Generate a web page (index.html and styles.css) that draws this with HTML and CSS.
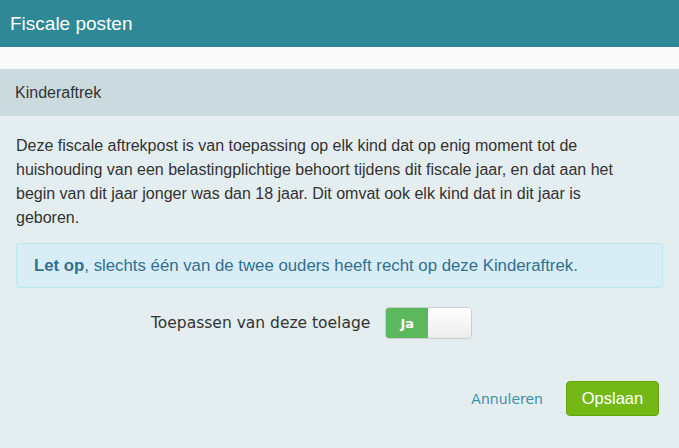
FILE: index.html
```html
<!DOCTYPE html>
<html lang="nl">
<head>
    <meta charset="UTF-8">
    <title>Fiscale posten</title>
    <link rel="stylesheet" href="styles.css">
</head>
<body>
    <div class="modal">
        <div class="modal-header">
            <h1>Fiscale posten</h1>
        </div>
        <div class="spacer"></div>
        <div class="section-title">Kinderaftrek</div>
        <div class="section-body">
            <p class="intro">Deze fiscale aftrekpost is van toepassing op elk kind dat op enig moment tot de huishouding van een belastingplichtige behoort tijdens dit fiscale jaar, en dat aan het begin van dit jaar jonger was dan 18 jaar. Dit omvat ook elk kind dat in dit jaar is geboren.</p>
            <div class="alert"><strong>Let op</strong>, slechts één van de twee ouders heeft recht op deze Kinderaftrek.</div>
            <div class="toggle-row">
                <span class="toggle-label">Toepassen van deze toelage</span>
                <div class="toggle">
                    <span class="toggle-on">Ja</span>
                    <span class="toggle-handle"></span>
                </div>
            </div>
            <div class="actions">
                <a href="#" class="cancel">Annuleren</a>
                <a href="#" class="save">Opslaan</a>
            </div>
        </div>
    </div>
</body>
</html>
```

FILE: styles.css
```css
*{
    margin: 0;
    padding: 0;
    box-sizing: border-box;
}

body{
    font-family: "Liberation Sans", Arial, sans-serif;
    background: #e4edf0;
    color: #333;
}

.modal{
    width: 679px;
    height: 448px;
    background: #e4edf0;
}

.modal-header{
    height: 47px;
    background: #2e8896;
    padding: 0 10px;
    display: flex;
    align-items: center;
}

.modal-header h1{
    color: #fff;
    font-size: 19px;
    font-weight: 400;
}

.spacer{
    height: 22px;
    background: #fafafa;
}

.section-title{
    height: 47px;
    background: #cbdadf;
    padding: 0 15px;
    display: flex;
    align-items: center;
    font-size: 16px;
    color: #333;
}

.section-body{
    padding: 18px 16px 0 16px;
}

.intro{
    font-size: 16px;
    line-height: 24px;
    color: #333;
    padding-right: 47px;
}

.alert{
    margin-top: 13px;
    height: 45px;
    background: #d9edf7;
    border: 1px solid #bce8f1;
    border-radius: 3px;
    color: #31708f;
    font-size: 16.8px;
    padding: 0 17px;
    display: flex;
    align-items: center;
}

.toggle-row{
    display: flex;
    align-items: center;
    padding-left: 135px;
    margin-top: 19px;
}

.toggle-label{
    font-family: "DejaVu Sans", Verdana, sans-serif;
    font-size: 15.5px;
    color: #333;
    margin-right: 15px;
}

.toggle{
    width: 87px;
    height: 32px;
    border: 1px solid #ccc;
    border-radius: 4px;
    display: flex;
    overflow: hidden;
}

.toggle-on{
    width: 42px;
    background: #5cb85c;
    color: #fff;
    font-family: "DejaVu Sans", Verdana, sans-serif;
    font-size: 13px;
    font-weight: 600;
    display: flex;
    align-items: center;
    justify-content: center;
}

.toggle-handle{
    flex: 1;
    background: linear-gradient(#fff, #ececec);
}

.actions{
    display: flex;
    justify-content: flex-end;
    align-items: center;
    margin-top: 42px;
    padding-right: 4px;
}

.cancel{
    color: #3a94a6;
    text-decoration: none;
    font-family: "DejaVu Sans", Verdana, sans-serif;
    font-size: 14px;
    margin-right: 23px;
}

.save{
    display: inline-block;
    background: #74b816;
    border: 1px solid #65a410;
    border-radius: 4px;
    color: #fff;
    text-decoration: none;
    font-size: 16.5px;
    width: 93px;
    height: 35px;
    line-height: 33px;
    text-align: center;
}
```
